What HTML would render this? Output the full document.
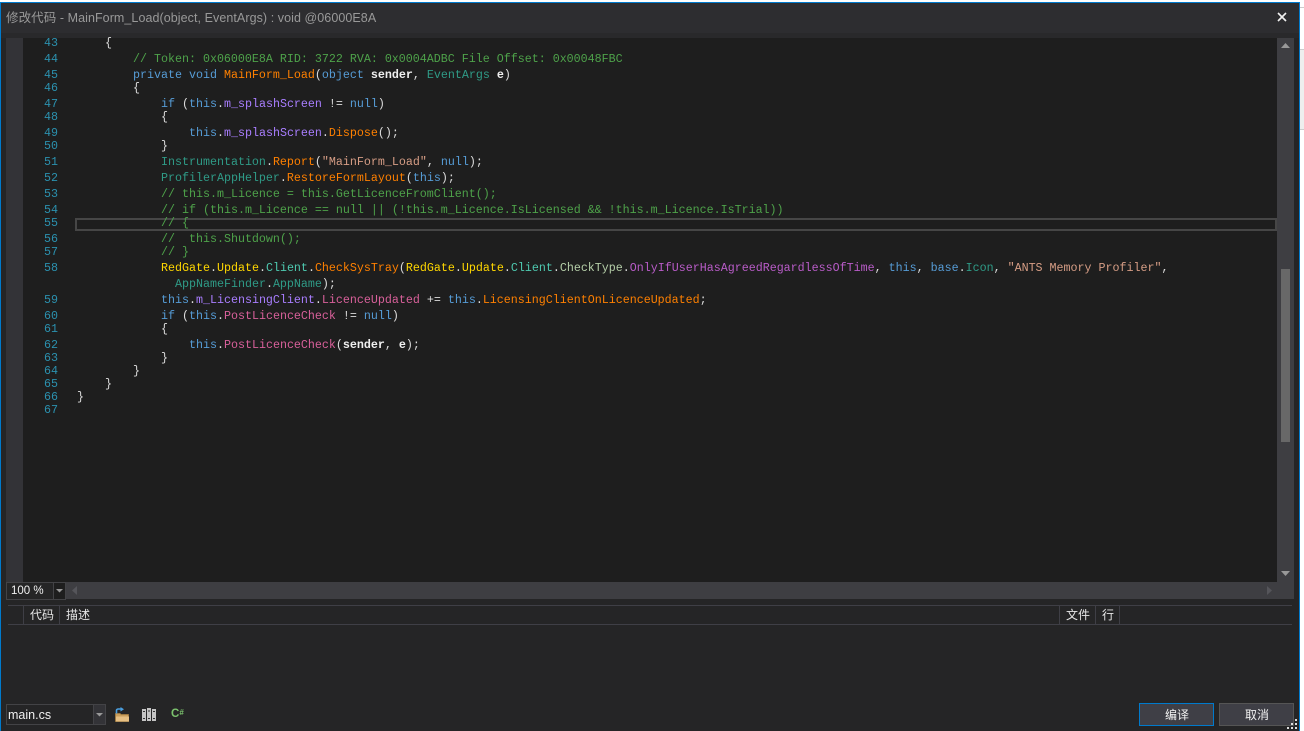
<!DOCTYPE html>
<html><head><meta charset="utf-8">
<style>
html,body{margin:0;padding:0;background:#fff;width:1304px;height:731px;overflow:hidden}
*{box-sizing:border-box}
.a{position:absolute}
#w{position:absolute;left:0;top:2px;width:1300px;height:729px;background:#252526;border:1px solid #007acc;border-width:1px 1px 0 1px}
.t{position:absolute;font:12.5px/16px "Liberation Sans","Noto Sans CJK SC",sans-serif;color:#e6e6e6;white-space:pre}
.l{position:absolute;left:0;height:16px;font:11.67px/16px "Liberation Mono",monospace;color:#dcdcdc;white-space:pre}
.n{position:absolute;left:30px;width:28px;text-align:right;height:16px;font:11.67px/16px "Liberation Mono",monospace;color:#2b91af}
.k{color:#569cd6}.c{color:#4ea24a}.m{color:#ff8000}.f{color:#a97eff}.s{color:#d69d85}.p{color:#f0f0f0;font-weight:bold}
.e{color:#2f9b87}.y{color:#ffd700}.q{color:#4ec9b0}.g{color:#b5cea8}.u{color:#b95cc8}.h{color:#d8609a}
.ln{position:absolute;background:#3f3f46}
</style></head><body>
<div class="a" style="left:1300px;top:49px;width:4px;height:81px;background:#eee;border-top:1px solid #ccc;border-bottom:1px solid #ccc"></div>
<div class="a" style="left:1300px;top:7px;width:4px;height:1px;background:#ccc"></div>
<div id="w"></div>
<div class="a" style="left:1px;top:3px;width:1298px;height:30px;background:#2d2d30"></div>
<div class="a" style="left:1px;top:33px;width:1298px;height:5px;background:#29292b"></div>
<div class="t" style="left:6px;top:10px;color:#999;font-size:12.5px;letter-spacing:.07px">修改代码 - MainForm_Load(object, EventArgs) : void @06000E8A</div>
<svg class="a" style="left:1277px;top:12px" width="10" height="10" viewBox="0 0 10 10"><path d="M1 1L9 9M9 1L1 9" stroke="#f1f1f1" stroke-width="1.6" fill="none"/></svg>

<!-- editor -->
<div class="a" style="left:6px;top:38px;width:1271px;height:544px;background:#1e1e1e"></div>
<div class="a" style="left:6px;top:38px;width:17px;height:544px;background:#333337"></div>
<div class="a" style="left:75px;top:218px;width:1202px;height:13px;border:2px solid #464646"></div>

<div class="n" style="top:35px">43</div><div class="l" style="left:105px;top:35px">{</div>
<div class="n" style="top:51px">44</div><div class="l c" style="left:133px;top:51px">// Token: 0x06000E8A RID: 3722 RVA: 0x0004ADBC File Offset: 0x00048FBC</div>
<div class="n" style="top:67px">45</div><div class="l" style="left:133px;top:67px"><span class="k">private void</span> <span class="m">MainForm_Load</span>(<span class="k">object</span> <span class="p">sender</span>, <span class="e">EventArgs</span> <span class="p">e</span>)</div>
<div class="n" style="top:80px">46</div><div class="l" style="left:133px;top:80px">{</div>
<div class="n" style="top:96px">47</div><div class="l" style="left:161px;top:96px"><span class="k">if</span> (<span class="k">this</span>.<span class="f">m_splashScreen</span> != <span class="k">null</span>)</div>
<div class="n" style="top:109px">48</div><div class="l" style="left:161px;top:109px">{</div>
<div class="n" style="top:125px">49</div><div class="l" style="left:189px;top:125px"><span class="k">this</span>.<span class="f">m_splashScreen</span>.<span class="m">Dispose</span>();</div>
<div class="n" style="top:138px">50</div><div class="l" style="left:161px;top:138px">}</div>
<div class="n" style="top:154px">51</div><div class="l" style="left:161px;top:154px"><span class="e">Instrumentation</span>.<span class="m">Report</span>(<span class="s">"MainForm_Load"</span>, <span class="k">null</span>);</div>
<div class="n" style="top:170px">52</div><div class="l" style="left:161px;top:170px"><span class="e">ProfilerAppHelper</span>.<span class="m">RestoreFormLayout</span>(<span class="k">this</span>);</div>
<div class="n" style="top:186px">53</div><div class="l c" style="left:161px;top:186px">// this.m_Licence = this.GetLicenceFromClient();</div>
<div class="n" style="top:202px">54</div><div class="l c" style="left:161px;top:202px">// if (this.m_Licence == null || (!this.m_Licence.IsLicensed &amp;&amp; !this.m_Licence.IsTrial))</div>
<div class="n" style="top:215px">55</div><div class="l c" style="left:161px;top:215px">// {</div>
<div class="n" style="top:231px">56</div><div class="l c" style="left:161px;top:231px">//  this.Shutdown();</div>
<div class="n" style="top:244px">57</div><div class="l c" style="left:161px;top:244px">// }</div>
<div class="n" style="top:260px">58</div><div class="l" style="left:161px;top:260px"><span class="y">RedGate</span>.<span class="y">Update</span>.<span class="q">Client</span>.<span class="m">CheckSysTray</span>(<span class="y">RedGate</span>.<span class="y">Update</span>.<span class="q">Client</span>.<span class="g">CheckType</span>.<span class="u">OnlyIfUserHasAgreedRegardlessOfTime</span>, <span class="k">this</span>, <span class="k">base</span>.<span class="e">Icon</span>, <span class="s">"ANTS Memory Profiler"</span>,</div>
<div class="l" style="left:175px;top:276px"><span class="e">AppNameFinder</span>.<span class="e">AppName</span>);</div>
<div class="n" style="top:292px">59</div><div class="l" style="left:161px;top:292px"><span class="k">this</span>.<span class="f">m_LicensingClient</span>.<span class="h">LicenceUpdated</span> += <span class="k">this</span>.<span class="m">LicensingClientOnLicenceUpdated</span>;</div>
<div class="n" style="top:308px">60</div><div class="l" style="left:161px;top:308px"><span class="k">if</span> (<span class="k">this</span>.<span class="h">PostLicenceCheck</span> != <span class="k">null</span>)</div>
<div class="n" style="top:321px">61</div><div class="l" style="left:161px;top:321px">{</div>
<div class="n" style="top:337px">62</div><div class="l" style="left:189px;top:337px"><span class="k">this</span>.<span class="h">PostLicenceCheck</span>(<span class="p">sender</span>, <span class="p">e</span>);</div>
<div class="n" style="top:350px">63</div><div class="l" style="left:161px;top:350px">}</div>
<div class="n" style="top:363px">64</div><div class="l" style="left:133px;top:363px">}</div>
<div class="n" style="top:376px">65</div><div class="l" style="left:105px;top:376px">}</div>
<div class="n" style="top:389px">66</div><div class="l" style="left:77px;top:389px">}</div>
<div class="n" style="top:402px">67</div>

<!-- scrollbars -->
<div class="a" style="left:1277px;top:38px;width:17px;height:544px;background:#3e3e42"></div>
<div class="a" style="left:1281px;top:269px;width:9px;height:173px;background:#686868"></div>
<svg class="a" style="left:1281px;top:42px" width="9" height="7"><path d="M4.5 1L9 6H0Z" fill="#999"/></svg>
<svg class="a" style="left:1281px;top:570px" width="9" height="7"><path d="M0 1H9L4.5 6Z" fill="#999"/></svg>
<div class="a" style="left:6px;top:582px;width:1288px;height:17px;background:#3e3e42"></div>
<svg class="a" style="left:71px;top:586px" width="7" height="10"><path d="M6 0V9L1 4.5Z" fill="#55555a"/></svg>
<svg class="a" style="left:1266px;top:586px" width="7" height="10"><path d="M1 0V9L6 4.5Z" fill="#55555a"/></svg>
<div class="a" style="left:6px;top:582px;width:48px;height:18px;background:#252526;border:1px solid #434346"></div>
<div class="a" style="left:53px;top:582px;width:13px;height:18px;background:#1e1e1e;border:1px solid #434346"></div>
<svg class="a" style="left:56px;top:589px" width="7" height="4"><path d="M0 0H7L3.500 3.500Z" fill="#999"/></svg>
<div class="t" style="left:11px;top:583px;font-size:11.5px;color:#f1f1f1">100 %</div>

<!-- error list -->
<div class="ln" style="left:8px;top:605px;width:1284px;height:1px"></div>
<div class="ln" style="left:8px;top:624px;width:1284px;height:1px"></div>
<div class="ln" style="left:23px;top:605px;width:1px;height:19px"></div>
<div class="ln" style="left:59px;top:605px;width:1px;height:19px"></div>
<div class="ln" style="left:1059px;top:605px;width:1px;height:19px"></div>
<div class="ln" style="left:1095px;top:605px;width:1px;height:19px"></div>
<div class="ln" style="left:1119px;top:605px;width:1px;height:19px"></div>
<div class="t" style="left:30px;top:607px;font-size:12px">代码</div>
<div class="t" style="left:66px;top:607px;font-size:12px">描述</div>
<div class="t" style="left:1066px;top:607px;font-size:12px">文件</div>
<div class="t" style="left:1102px;top:607px;font-size:12px">行</div>

<!-- bottom bar -->
<div class="a" style="left:6px;top:704px;width:88px;height:21px;background:#252526;border:1px solid #434346"></div>
<div class="a" style="left:93px;top:704px;width:13px;height:21px;background:#333337;border:1px solid #434346"></div>
<svg class="a" style="left:96px;top:713px" width="7" height="4"><path d="M0 0H7L3.500 3.500Z" fill="#999"/></svg>
<div class="t" style="left:8px;top:707px;font-size:12.5px;color:#f1f1f1">main.cs</div>

<svg class="a" style="left:115px;top:707px" width="15" height="15" viewBox="0 0 15 15">
<path d="M0.500 6.500H5L6 7.500H13.500V14.500H0.500Z" fill="#c99e5c" stroke="#a87f42" stroke-width=".8"/>
<path d="M1 9.500H14V14.500H1Z" fill="#e6bf83"/>
<path d="M1.500 6.500V3.500Q1.500 2 3.500 2H6" fill="none" stroke="#4a9fe0" stroke-width="1.600"/>
<path d="M5.500 0L9 2.200L5.500 4.500Z" fill="#4a9fe0"/>
</svg>
<svg class="a" style="left:142px;top:708px" width="15" height="13" viewBox="0 0 15 13">
<rect x="0" y="1" width="4" height="12" fill="#c4c4c4"/><rect x="5" y="0" width="4" height="13" fill="#c4c4c4"/><rect x="10" y="1" width="4" height="12" fill="#c4c4c4"/>
<path d="M1 3.500H3M6 3H8M11 3.500H13M1 10.500H3M6 10.500H8M11 10.500H13" stroke="#333" stroke-width="1"/>
</svg>
<div class="a" style="left:171px;top:707px;font:bold 11.5px/12px 'Liberation Sans',sans-serif;color:#7cc36e;white-space:pre">C<span style="font-size:8px;vertical-align:2px">#</span></div>

<div class="a" style="left:1139px;top:703px;width:75px;height:23px;background:#3f3f46;border:1px solid #007acc"></div>
<div class="a" style="left:1219px;top:703px;width:75px;height:23px;background:#3f3f46;border:1px solid #555"></div>
<div class="t" style="left:1165px;top:707px;font-size:12px;color:#f1f1f1">编译</div>
<div class="t" style="left:1245px;top:707px;font-size:12px;color:#f1f1f1">取消</div>
<svg class="a" style="left:1287px;top:719px" width="12" height="12" fill="#ddd">
<rect x="8" y="0" width="2" height="2"/><rect x="4" y="4" width="2" height="2"/><rect x="8" y="4" width="2" height="2"/><rect x="0" y="8" width="2" height="2"/><rect x="4" y="8" width="2" height="2"/><rect x="8" y="8" width="2" height="2"/>
</svg>
</body></html>
